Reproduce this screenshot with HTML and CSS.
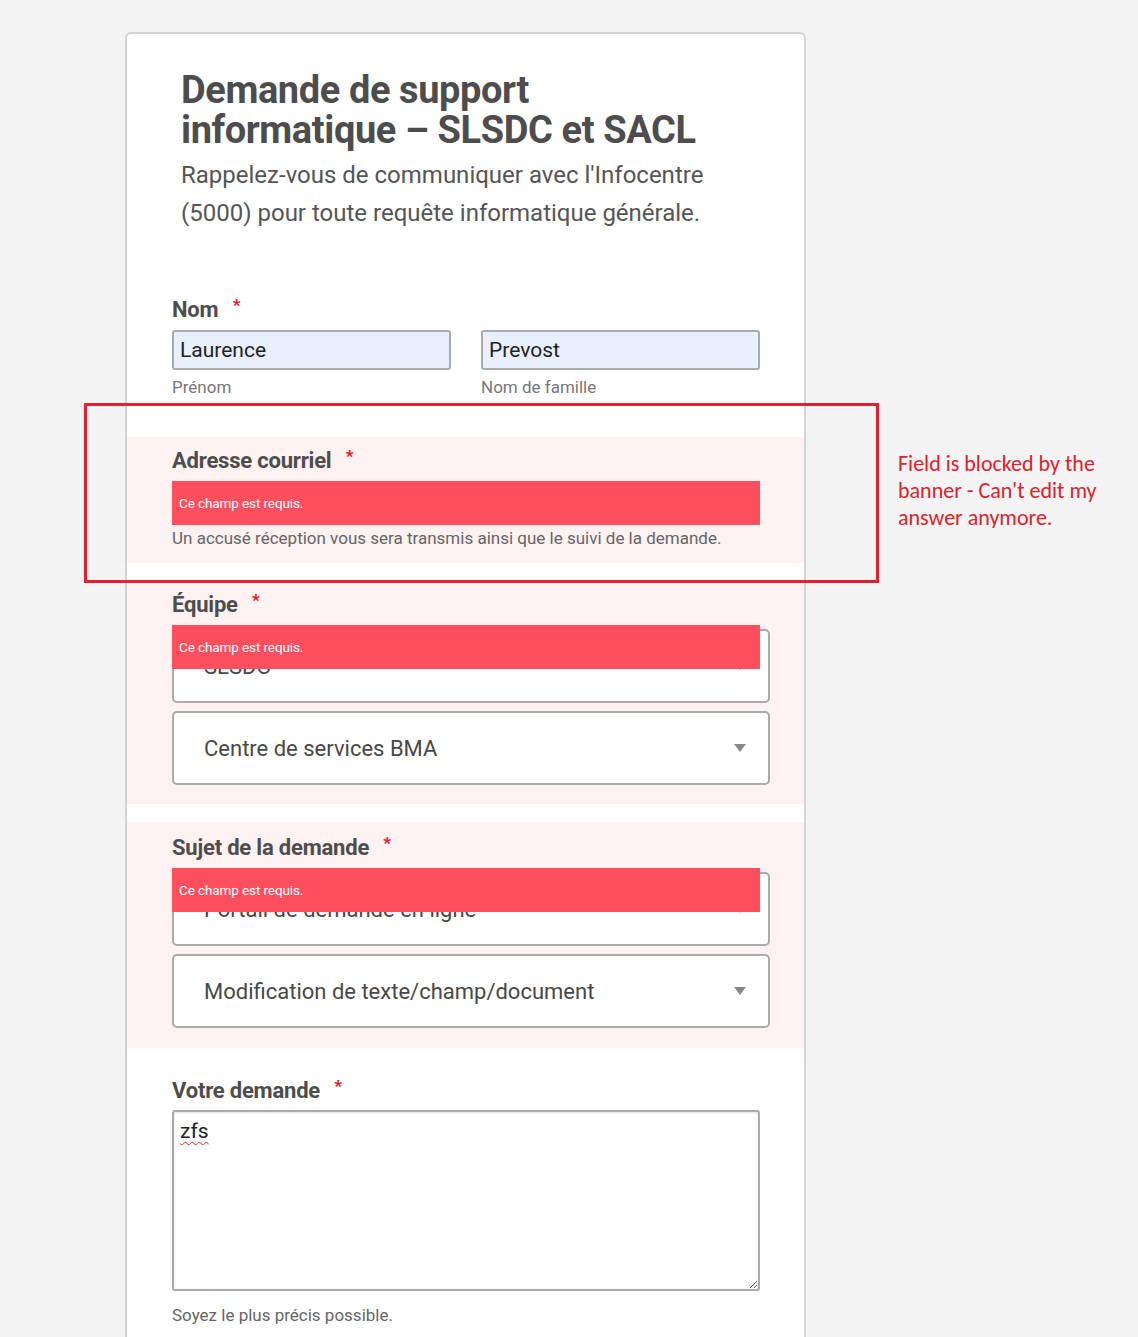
FILE: index.html
```html
<!DOCTYPE html>
<html lang="fr">
<head>
<meta charset="utf-8">
<title>Demande de support informatique – SLSDC et SACL</title>
<link rel="stylesheet" href="styles.css">
</head>
<body>
<div class="page">
  <main class="card">
    <header class="intro">
      <h1 class="title">Demande de support informatique – SLSDC et SACL</h1>
      <p class="lead">Rappelez-vous de communiquer avec l'Infocentre (5000) pour toute requête informatique générale.</p>
    </header>

    <section class="field field-name">
      <label class="label">Nom <span class="req">*</span></label>
      <div class="name-row">
        <div class="name-col">
          <input class="text-input autofill" type="text" value="Laurence">
          <span class="sublabel">Prénom</span>
        </div>
        <div class="name-col">
          <input class="text-input autofill" type="text" value="Prevost">
          <span class="sublabel">Nom de famille</span>
        </div>
      </div>
    </section>

    <section class="field invalid field-email">
      <label class="label">Adresse courriel <span class="req">*</span></label>
      <div class="control">
        <input class="text-input email-input" type="email" value="">
        <div class="error">Ce champ est requis.</div>
      </div>
      <p class="help">Un accusé réception vous sera transmis ainsi que le suivi de la demande.</p>
    </section>

    <section class="field invalid field-select">
      <label class="label">Équipe <span class="req">*</span></label>
      <div class="control">
        <div class="select"><span class="select-value">SLSDC</span><svg class="caret" viewBox="0 0 12 8" width="12" height="8"><path d="M0 0H12L6 8Z"/></svg></div>
        <div class="error">Ce champ est requis.</div>
      </div>
      <div class="select"><span class="select-value">Centre de services BMA</span><svg class="caret" viewBox="0 0 12 8" width="12" height="8"><path d="M0 0H12L6 8Z"/></svg></div>
    </section>

    <section class="field invalid field-select">
      <label class="label">Sujet de la demande <span class="req">*</span></label>
      <div class="control">
        <div class="select"><span class="select-value">Portail de demande en ligne</span><svg class="caret" viewBox="0 0 12 8" width="12" height="8"><path d="M0 0H12L6 8Z"/></svg></div>
        <div class="error">Ce champ est requis.</div>
      </div>
      <div class="select"><span class="select-value">Modification de texte/champ/document</span><svg class="caret" viewBox="0 0 12 8" width="12" height="8"><path d="M0 0H12L6 8Z"/></svg></div>
    </section>

    <section class="field field-request">
      <label class="label">Votre demande <span class="req">*</span></label>
      <div class="textarea" role="textbox" aria-multiline="true"><span class="misspelled">zfs</span></div>
      <p class="help">Soyez le plus précis possible.</p>
    </section>
  </main>

  <div class="highlight"></div>
  <p class="note">Field is blocked by the banner - Can't edit my answer anymore.</p>
</div>
</body>
</html>
```

FILE: styles.css
```css
html, body {
  margin: 0;
  padding: 0;
  background: #f4f4f4;
}

body {
  font-family: "Roboto", "Liberation Sans", sans-serif;
  color: #4d4d4d;
}

.page {
  position: relative;
  height: 1337px;
  overflow: hidden;
}

.card {
  box-sizing: border-box;
  width: 681px;
  margin: 32px 0 0 125px;
  background: #fff;
  border: 2px solid #d3d3d3;
  border-bottom: 0;
  border-radius: 6px 6px 0 0;
  padding-bottom: 60px;
}

.intro {
  padding: 36px 30px 0 54px;
}

.title {
  margin: 0;
  font-size: 38px;
  line-height: 40px;
  letter-spacing: -0.4px;
  font-weight: 700;
  color: #4d4d4d;
  width: 560px;
}

.lead {
  margin: 6px 0 0;
  font-size: 24px;
  line-height: 38px;
  color: #555;
  width: 535px;
}

.field {
  padding: 0 34px 0 45px;
}

.label {
  display: block;
  font-size: 22px;
  line-height: 26px;
  letter-spacing: -0.2px;
  font-weight: 700;
  color: #4d4d4d;
}

.req {
  color: #e8141e;
  font-size: 17px;
  vertical-align: 6px;
  margin-left: 9px;
}

.field-name {
  margin-top: 60px;
}

.name-row {
  margin-top: 7px;
  width: 588px;
  display: grid;
  grid-template-columns: 1fr 1fr;
  column-gap: 30px;
}

.name-col {
  display: flex;
  flex-direction: column;
}

.text-input {
  box-sizing: border-box;
  width: 100%;
  height: 40px;
  margin: 0;
  padding: 0 6px;
  border: 2px solid #ababab;
  border-radius: 3px;
  background: #fff;
  font-family: inherit;
  font-size: 21px;
  color: #222;
  outline: none;
}

.text-input.autofill {
  background: #e8f0fe;
}

.sublabel {
  margin-top: 7px;
  font-size: 17px;
  line-height: 20px;
  color: #777;
}

.invalid {
  background: #fdf1f1;
}

.field-email {
  margin-top: 40px;
  padding-top: 6px;
  padding-bottom: 15px;
}

.control {
  position: relative;
  margin-top: 7px;
}

.field-email .control {
  width: 588px;
}

.email-input {
  height: 44px;
}

.error {
  position: absolute;
  left: 0;
  top: 0;
  box-sizing: border-box;
  width: 588px;
  height: 44px;
  padding-left: 7px;
  display: flex;
  align-items: center;
  background: #ff4f5e;
  color: #fff;
  font-size: 13.5px;
  letter-spacing: -0.1px;
}

.field-select .control {
  margin-top: 11px;
}

.field-select .error {
  top: -4px;
}

.help {
  margin: 3px 0 0;
  font-size: 17px;
  line-height: 20px;
  color: #666;
}

.field-select {
  margin-top: 18px;
  padding-top: 6px;
  padding-bottom: 19px;
}

.field-select + .field-select {
  padding-top: 8px;
  padding-bottom: 20px;
}

.select {
  box-sizing: border-box;
  height: 74px;
  border: 2px solid #ababab;
  border-radius: 5px;
  background: #fff;
  padding: 0 22px 0 30px;
  display: flex;
  align-items: center;
  justify-content: space-between;
  font-size: 22px;
  color: #484848;
}

.select + .select,
.control + .select {
  margin-top: 8px;
}

.caret {
  fill: #888;
  flex: none;
}

.field-request {
  padding-top: 25px;
}

.textarea {
  box-sizing: border-box;
  width: 588px;
  height: 181px;
  margin-top: 6px;
  padding: 4px 6px;
  border: 2px solid #ababab;
  border-radius: 3px;
  box-shadow: inset 0 1px 3px rgba(0, 0, 0, 0.12);
  font-size: 21px;
  line-height: 30px;
  color: #222;
  overflow: auto;
  resize: both;
}

.misspelled {
  text-decoration: underline wavy #e0202a;
  text-decoration-thickness: 1px;
  text-underline-offset: 3px;
}

.field-request .help {
  margin-top: 14px;
}

.highlight {
  position: absolute;
  left: 84px;
  top: 403px;
  box-sizing: border-box;
  width: 795px;
  height: 180px;
  border: 3px solid #e3202b;
  pointer-events: none;
}

.note {
  position: absolute;
  left: 898px;
  top: 450px;
  width: 230px;
  height: 78px;
  overflow: hidden;
  margin: 0;
  font-family: "Carlito", "Lato", "Open Sans", sans-serif;
  font-size: 22px;
  line-height: 27px;
  color: #e0202a;
}
```
